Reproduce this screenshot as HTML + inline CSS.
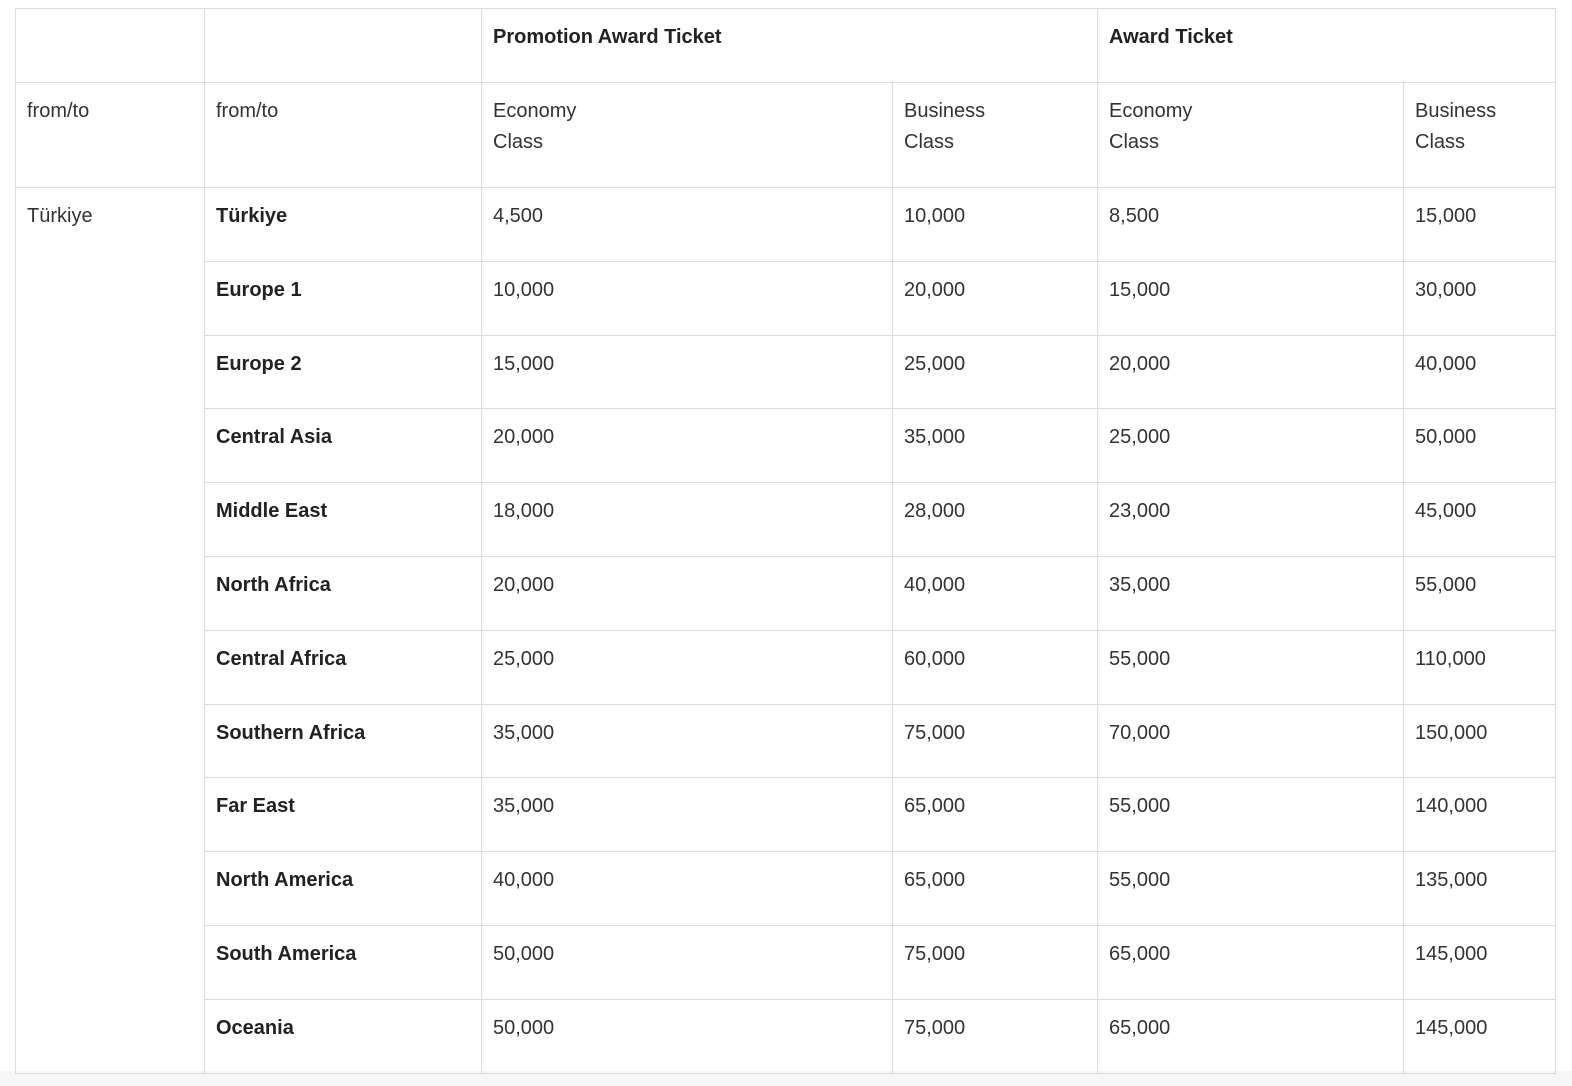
<!DOCTYPE html>
<html><head><meta charset="utf-8"><style>
html,body{margin:0;padding:0;width:1572px;height:1086px;overflow:hidden;background:#fff;}
body{background:linear-gradient(#fff 0,#fff 1071px,#f6f6f6 1071px);}
table{position:absolute;left:15px;top:8px;border-collapse:collapse;table-layout:fixed;width:1540px;font-family:"Liberation Sans","DejaVu Sans",sans-serif;font-size:20px;color:#333;}
td{border:1px solid #dcdcdc;vertical-align:top;padding:13px 10px 0 11px;line-height:31px;box-sizing:border-box;}
b{color:#222;font-weight:bold;}
tr{height:73.8px;}
tr.h2{height:105px;}
</style></head><body>
<table>
<colgroup><col style="width:189px"><col style="width:277px"><col style="width:411px"><col style="width:205px"><col style="width:306px"><col style="width:152px"></colgroup>
<tr style="height:74px"><td></td><td></td><td colspan="2"><b>Promotion Award Ticket</b></td><td colspan="2"><b>Award Ticket</b></td></tr>
<tr class="h2"><td>from/to</td><td>from/to</td><td>Economy<br>Class</td><td>Business<br>Class</td><td>Economy<br>Class</td><td>Business<br>Class</td></tr>
<tr><td rowspan="12">Türkiye</td><td><b>Türkiye</b></td><td>4,500</td><td>10,000</td><td>8,500</td><td>15,000</td></tr>
<tr><td><b>Europe 1</b></td><td>10,000</td><td>20,000</td><td>15,000</td><td>30,000</td></tr>
<tr><td><b>Europe 2</b></td><td>15,000</td><td>25,000</td><td>20,000</td><td>40,000</td></tr>
<tr><td><b>Central Asia</b></td><td>20,000</td><td>35,000</td><td>25,000</td><td>50,000</td></tr>
<tr><td><b>Middle East</b></td><td>18,000</td><td>28,000</td><td>23,000</td><td>45,000</td></tr>
<tr><td><b>North Africa</b></td><td>20,000</td><td>40,000</td><td>35,000</td><td>55,000</td></tr>
<tr><td><b>Central Africa</b></td><td>25,000</td><td>60,000</td><td>55,000</td><td>110,000</td></tr>
<tr><td><b>Southern Africa</b></td><td>35,000</td><td>75,000</td><td>70,000</td><td>150,000</td></tr>
<tr><td><b>Far East</b></td><td>35,000</td><td>65,000</td><td>55,000</td><td>140,000</td></tr>
<tr><td><b>North America</b></td><td>40,000</td><td>65,000</td><td>55,000</td><td>135,000</td></tr>
<tr><td><b>South America</b></td><td>50,000</td><td>75,000</td><td>65,000</td><td>145,000</td></tr>
<tr><td><b>Oceania</b></td><td>50,000</td><td>75,000</td><td>65,000</td><td>145,000</td></tr>
</table>
</body></html>
